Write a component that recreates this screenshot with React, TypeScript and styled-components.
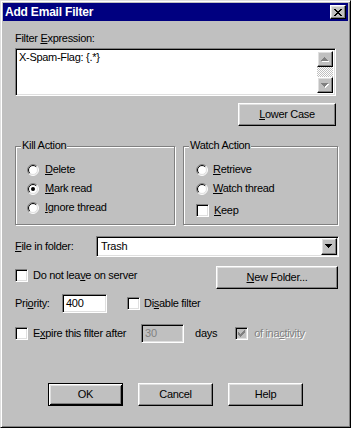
import { ReactNode } from 'react';
import styled, { createGlobalStyle, css } from 'styled-components';

// SECTION: Styles

const GlobalStyle = createGlobalStyle`
  html, body {
    margin: 0;
    padding: 0;
    background: #c0c0c0;
  }
  body {
    font-family: "Liberation Sans", Arial, sans-serif;
    font-size: 11px;
    line-height: 13px;
  }
`;

const raised = css`
  border: 1px solid;
  border-color: #fff #000 #000 #fff;
  box-shadow: inset -1px -1px #808080, inset 1px 1px #dfdfdf;
`;

const sunken = css`
  border: 1px solid;
  border-color: #808080 #fff #fff #808080;
  box-shadow: inset 1px 1px #000, inset -1px -1px #dfdfdf;
`;

const Window = styled.div`
  box-sizing: border-box;
  width: 351px;
  height: 428px;
  padding: 2px;
  border: 1px solid;
  border-color: #dfdfdf #000 #000 #dfdfdf;
  box-shadow: inset 1px 1px #fff, inset -1px -1px #808080;
  background: #c0c0c0;
  color: #000;
  display: flex;
  flex-direction: column;
  letter-spacing: -0.3px;
`;

const TitleBar = styled.div`
  height: 18px;
  flex: none;
  background: #000080;
  display: flex;
  align-items: center;
  padding: 0 2px;
`;

const Title = styled.div`
  flex: 1;
  color: #fff;
  font-weight: bold;
  font-size: 12px;
  letter-spacing: -0.2px;
`;

const CloseButton = styled.div`
  box-sizing: border-box;
  width: 16px;
  height: 14px;
  background: #c0c0c0;
  ${raised}
  display: flex;
  align-items: center;
  justify-content: center;
`;

const Body = styled.div`
  flex: 1;
  display: flex;
  flex-direction: column;
  padding: 11px 9px 19px 12px;
`;

const FieldLabel = styled.div`
  height: 13px;
`;

const TextBox = styled.div`
  box-sizing: border-box;
  height: 48px;
  margin: 3px 3px 0 0;
  background: #fff;
  ${sunken}
  display: flex;
  padding: 2px;
`;

const TextValue = styled.div`
  flex: 1;
  padding: 0 1px;
`;

const ScrollBar = styled.div`
  width: 16px;
  display: flex;
  flex-direction: column;
`;

const ScrollTrack = styled.div`
  flex: 1;
  background-image: conic-gradient(#fff 25%, #c0c0c0 0 50%, #fff 0 75%, #c0c0c0 0);
  background-size: 2px 2px;
`;

const SmallButton = styled.div<{ $h: number }>`
  box-sizing: border-box;
  width: 16px;
  height: ${(p) => p.$h}px;
  flex: none;
  background: #c0c0c0;
  ${raised}
  display: flex;
  align-items: center;
  justify-content: center;
`;

const Button = styled.button<{ $default?: boolean; $width: number }>`
  box-sizing: border-box;
  width: ${(p) => p.$width}px;
  height: 23px;
  flex: none;
  padding: 0;
  margin: 0;
  font: inherit;
  letter-spacing: inherit;
  color: #000;
  background: #c0c0c0;
  ${raised}
  ${(p) =>
    p.$default &&
    css`
      border-color: #000;
      box-shadow: inset 1px 1px #fff, inset -1px -1px #000, inset 2px 2px #dfdfdf,
        inset -2px -2px #808080;
    `}
`;

const RightButton = styled(Button)`
  align-self: flex-end;
  margin-top: 7px;
  margin-right: 3px;
`;

const Groups = styled.div`
  display: flex;
  gap: 8px;
  margin-top: 20px;
  margin-right: 1px;
`;

const Group = styled.div<{ $width?: number; $pad: number }>`
  box-sizing: border-box;
  position: relative;
  height: 79px;
  ${(p) => (p.$width ? `width: ${p.$width}px;` : 'flex: 1;')}
  border: 1px solid #808080;
  box-shadow: inset 1px 1px #fff, 1px 1px #fff;
  padding: 13px 0 0 ${(p) => p.$pad}px;
`;

const Legend = styled.div`
  position: absolute;
  top: -8px;
  left: 5px;
  padding: 0 1px;
  background: #c0c0c0;
`;

const OptionRow = styled.div<{ $gap: number; $top?: number }>`
  display: flex;
  align-items: center;
  gap: ${(p) => p.$gap}px;
  height: 19px;
  margin-top: ${(p) => p.$top ?? 0}px;
`;

const Row = styled.div<{ $top: number; $h: number }>`
  display: flex;
  align-items: center;
  height: ${(p) => p.$h}px;
  margin-top: ${(p) => p.$top}px;
`;

const RowLabel = styled.div<{ $width: number }>`
  width: ${(p) => p.$width}px;
  flex: none;
`;

const Select = styled.div`
  box-sizing: border-box;
  flex: 1;
  height: 21px;
  background: #fff;
  ${sunken}
  padding: 1px 1px 1px 4px;
  display: flex;
  align-items: center;
`;

const SelectValue = styled.div`
  flex: 1;
`;

const CheckRow = styled.div<{ $gap: number; $left?: number }>`
  display: flex;
  align-items: center;
  gap: ${(p) => p.$gap}px;
  margin-left: ${(p) => p.$left ?? 0}px;
`;

const Spread = styled.div`
  display: flex;
  justify-content: space-between;
  align-items: flex-start;
  height: 23px;
  margin-top: 9px;
  margin-right: 1px;
  ${CheckRow} {
    margin-top: 3px;
  }
`;

const Edit = styled.div<{ $width: number; $disabled?: boolean }>`
  box-sizing: border-box;
  width: ${(p) => p.$width}px;
  height: 19px;
  flex: none;
  background: ${(p) => (p.$disabled ? '#c0c0c0' : '#fff')};
  color: ${(p) => (p.$disabled ? '#808080' : '#000')};
  ${sunken}
  padding: 0 3px;
  display: flex;
  align-items: center;
`;

const Box = styled.span<{ $disabled?: boolean }>`
  box-sizing: border-box;
  flex: none;
  width: 13px;
  height: 13px;
  background: ${(p) => (p.$disabled ? '#c0c0c0' : '#fff')};
  ${sunken}
  display: flex;
  align-items: center;
  justify-content: center;
`;

const Dim = styled.span`
  color: #808080;
  text-shadow: 1px 1px #fff;
`;

const Plain = styled.span<{ $left: number }>`
  margin-left: ${(p) => p.$left}px;
`;

const Footer = styled.div`
  margin-top: auto;
  display: flex;
  gap: 15px;
  padding-left: 33px;
`;

// !SECTION

// SECTION: Glyphs

const CloseGlyph = () => {
  const px: [number, number, number][] = [
    [0, 0, 2], [6, 0, 2],
    [1, 1, 2], [5, 1, 2],
    [2, 2, 4],
    [3, 3, 2],
    [2, 4, 4],
    [1, 5, 2], [5, 5, 2],
    [0, 6, 2], [6, 6, 2],
  ];
  return (
    <svg width="8" height="7" shapeRendering="crispEdges">
      {px.map(([x, y, w], i) => (
        <rect key={i} x={x} y={y} width={w} height={1} fill="#000" />
      ))}
    </svg>
  );
};

const Arrow = ({ down, disabled }: { down?: boolean; disabled?: boolean }) => {
  const rows = [0, 1, 2, 3].map((i) => ({ x: 3 - i, y: down ? 3 - i : i, w: 2 * i + 1 }));
  return (
    <svg width="8" height="5" shapeRendering="crispEdges">
      {disabled &&
        rows.map((r, i) => (
          <rect key={`s${i}`} x={r.x + 1} y={r.y + 1} width={r.w} height={1} fill="#fff" />
        ))}
      {rows.map((r, i) => (
        <rect key={i} x={r.x} y={r.y} width={r.w} height={1} fill={disabled ? '#808080' : '#000'} />
      ))}
    </svg>
  );
};

const Check = ({ color }: { color: string }) => {
  const px: [number, number, number][] = [
    [6, 0, 1], [5, 1, 2], [0, 2, 1], [4, 2, 3], [0, 3, 2], [3, 3, 3], [0, 4, 5], [1, 5, 3], [2, 6, 1],
  ];
  return (
    <svg width="7" height="7" shapeRendering="crispEdges">
      {px.map(([x, y, w], i) => (
        <rect key={i} x={x} y={y} width={w} height={1} fill={color} />
      ))}
    </svg>
  );
};

const arc = (r: number, first: boolean) => {
  const a = r * 0.7071;
  const [sx, sy, ex, ey] = first ? [6 - a, 6 + a, 6 + a, 6 - a] : [6 + a, 6 - a, 6 - a, 6 + a];
  return `M${sx} ${sy} A${r} ${r} 0 0 1 ${ex} ${ey}`;
};

const Radio = ({ checked }: { checked?: boolean }) => (
  <svg width="12" height="12" style={{ flex: 'none' }}>
    <circle cx="6" cy="6" r="5" fill="#fff" />
    <path d={arc(5.5, true)} stroke="#808080" fill="none" />
    <path d={arc(5.5, false)} stroke="#fff" fill="none" />
    <path d={arc(4.5, true)} stroke="#000" fill="none" />
    <path d={arc(4.5, false)} stroke="#dfdfdf" fill="none" />
    {checked && <circle cx="6" cy="6" r="2" fill="#000" />}
  </svg>
);

const CheckBox = ({ label, checked, disabled }: { label: ReactNode; checked?: boolean; disabled?: boolean }) => (
  <>
    <Box $disabled={disabled}>{checked && <Check color={disabled ? '#808080' : '#000'} />}</Box>
    {disabled ? <Dim>{label}</Dim> : <span>{label}</span>}
  </>
);

// !SECTION

// SECTION: Main

const AddEmailFilter = () => (
  <Window>
    <TitleBar>
      <Title>Add Email Filter</Title>
      <CloseButton>
        <CloseGlyph />
      </CloseButton>
    </TitleBar>
    <Body>
      <FieldLabel>
        Filter <u>E</u>xpression:
      </FieldLabel>
      <TextBox>
        <TextValue>X-Spam-Flag: {'{.*}'}</TextValue>
        <ScrollBar>
          <SmallButton $h={16}>
            <Arrow disabled />
          </SmallButton>
          <ScrollTrack />
          <SmallButton $h={16}>
            <Arrow down disabled />
          </SmallButton>
        </ScrollBar>
      </TextBox>
      <RightButton $width={98}>
        <u>L</u>ower Case
      </RightButton>

      <Groups>
        <Group $width={160} $pad={11}>
          <Legend>Kill Action</Legend>
          <OptionRow $gap={6}>
            <Radio />
            <span>
              <u>D</u>elete
            </span>
          </OptionRow>
          <OptionRow $gap={6}>
            <Radio checked />
            <span>
              <u>M</u>ark read
            </span>
          </OptionRow>
          <OptionRow $gap={6}>
            <Radio />
            <span>
              <u>I</u>gnore thread
            </span>
          </OptionRow>
        </Group>
        <Group $pad={12}>
          <Legend>Watch Action</Legend>
          <OptionRow $gap={5}>
            <Radio />
            <span>
              <u>R</u>etrieve
            </span>
          </OptionRow>
          <OptionRow $gap={5}>
            <Radio />
            <span>
              <u>W</u>atch thread
            </span>
          </OptionRow>
          <OptionRow $gap={5} $top={3}>
            <CheckBox
              label={
                <>
                  <u>K</u>eep
                </>
              }
            />
          </OptionRow>
        </Group>
      </Groups>

      <Row $top={11} $h={21}>
        <RowLabel $width={81}>
          <u>F</u>ile in folder:
        </RowLabel>
        <Select>
          <SelectValue>Trash</SelectValue>
          <SmallButton $h={17}>
            <Arrow down />
          </SmallButton>
        </Select>
      </Row>

      <Spread>
        <CheckRow $gap={5}>
          <CheckBox
            label={
              <>
                Do not lea<u>v</u>e on server
              </>
            }
          />
        </CheckRow>
        <Button $width={122}>
          <u>N</u>ew Folder...
        </Button>
      </Spread>

      <Row $top={5} $h={19}>
        <RowLabel $width={47}>
          Pri<u>o</u>rity:
        </RowLabel>
        <Edit $width={45}>400</Edit>
        <CheckRow $gap={4} $left={20}>
          <CheckBox
            label={
              <>
                Di<u>s</u>able filter
              </>
            }
          />
        </CheckRow>
      </Row>

      <Row $top={11} $h={19}>
        <CheckRow $gap={5}>
          <CheckBox
            label={
              <>
                E<u>x</u>pire this filter after
              </>
            }
          />
        </CheckRow>
        <Edit $width={43} $disabled style={{ marginLeft: 15 }}>
          30
        </Edit>
        <Plain $left={11}>days</Plain>
        <CheckRow $gap={6} $left={18}>
          <CheckBox
            checked
            disabled
            label={
              <>
                of ina<u>c</u>tivity
              </>
            }
          />
        </CheckRow>
      </Row>

      <Footer>
        <Button $width={75} $default>
          OK
        </Button>
        <Button $width={75}>Cancel</Button>
        <Button $width={75}>Help</Button>
      </Footer>
    </Body>
  </Window>
);

// !SECTION

export default function App() {
  return (
    <>
      <GlobalStyle />
      <AddEmailFilter />
    </>
  );
}
